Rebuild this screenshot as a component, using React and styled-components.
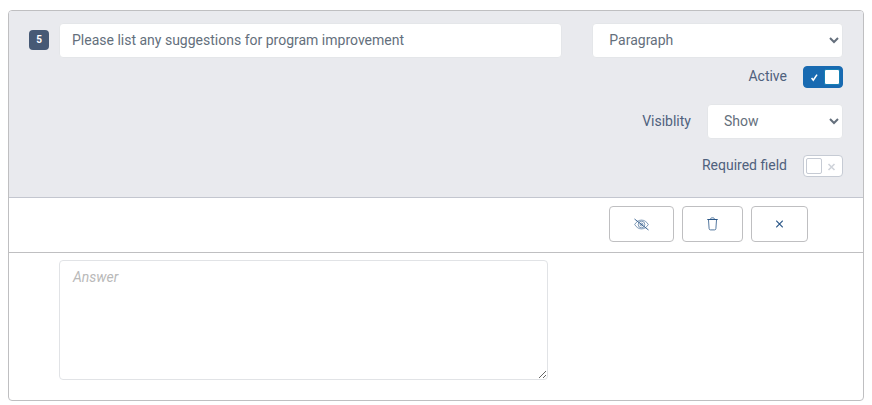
import { useState } from 'react';
import styled, { createGlobalStyle } from 'styled-components';

const GlobalStyle = createGlobalStyle`
  * {
    box-sizing: border-box;
  }
  body {
    margin: 10px 8px 4px;
    background: #fff;
    color: #4f617d;
    font-family: Roboto, 'Liberation Sans', sans-serif;
    font-size: 14px;
    line-height: 20px;
  }
`;

const Card = styled.form`
  border: 1px solid #bfbfc1;
  border-radius: 4px;
  overflow: hidden;
`;

const Header = styled.div`
  display: grid;
  grid-template-columns: 20px 2fr 1fr;
  align-items: start;
  padding: 12px 20px 20px;
  background: #e9eaee;
  border-bottom: 1px solid #c3c6cf;
`;

const Badge = styled.span`
  display: flex;
  align-items: center;
  justify-content: center;
  height: 20px;
  margin-top: 7px;
  border-radius: 4px;
  background: #465975;
  color: white;
  font-size: 10px;
  font-weight: 700;
`;

const Question = styled.div`
  display: flex;
  margin: 0 16px 0 10px;
`;

const Input = styled.input`
  width: 100%;
  height: 35px;
  padding: 5px 12px 7px;
  border: 1px solid #e4e6e9;
  border-radius: 4px;
  background: white;
  color: #646f7c;
  font: inherit;
  outline: none;
`;

const Settings = styled.div`
  display: flex;
  flex-direction: column;
  align-items: flex-end;
  margin-left: 14px;
`;

const Select = styled.select`
  width: ${(props) => props.$width || '100%'};
  height: 35px;
  padding: 5px 0 7px 12px;
  border: 1px solid #e4e6e9;
  border-radius: 4px;
  background: white;
  color: #646f7c;
  font: inherit;
  outline: none;
`;

const Setting = styled.label`
  display: flex;
  align-items: center;
  gap: 16px;
  margin-top: ${(props) => props.$top};
`;

const SettingText = styled.span`
  padding-bottom: 2px;
`;

const Switch = styled.span`
  display: grid;
  width: 40px;
  height: 22px;
`;

const SwitchInput = styled.input`
  grid-area: 1 / 1;
  appearance: none;
  width: 40px;
  height: 22px;
  margin: 0;
  border: 1px solid #c6cbd4;
  border-radius: 4px;
  background: white;
  cursor: pointer;
  &:checked {
    border-color: #186ab1;
    background: #186ab1;
  }
`;

const SwitchFace = styled.span`
  grid-area: 1 / 1;
  display: flex;
  flex-direction: ${(props) => (props.$on ? 'row-reverse' : 'row')};
  align-items: center;
  justify-content: space-between;
  padding: ${(props) => (props.$on ? '0 3px 0 7px' : '0 7px 0 3px')};
  pointer-events: none;
`;

const Knob = styled.span`
  width: 16px;
  height: 16px;
  border: 1px solid ${(props) => (props.$on ? '#1680b5' : '#c6cbd4')};
  border-radius: 2px;
  background: white;
`;

const Toolbar = styled.div`
  display: flex;
  justify-content: flex-end;
  gap: 8px;
  padding: 8px 55px 10px 20px;
  border-bottom: 1px solid #bfbfc1;
`;

const ToolButton = styled.button`
  display: flex;
  align-items: center;
  height: 36px;
  padding: 0 24px;
  border: 1px solid #bfbfc1;
  border-radius: 4px;
  background: white;
  color: #2b5788;
  cursor: pointer;
`;

const Answer = styled.div`
  padding: 7px 52px 20px 50px;
`;

const TextArea = styled.textarea`
  display: block;
  width: 65%;
  height: 120px;
  padding: 6px 13px;
  border: 1px solid #e1e3e6;
  border-radius: 4px;
  color: #646f7c;
  font: inherit;
  outline: none;
  resize: both;
  &::placeholder {
    color: #b9b9b9;
    font-style: italic;
  }
`;

const CheckIcon = () => (
  <svg width='9' height='9' viewBox='0 0 9 9' fill='none'>
    <path d='M1.6 5 3.3 7.2 7 1.6' stroke='#fff' strokeWidth='1.6' />
  </svg>
);

const OffIcon = () => (
  <svg width='9' height='9' viewBox='0 0 9 9' fill='none'>
    <path d='M1.5 2 7.5 8M7.5 2 1.5 8' stroke='#cfd3da' strokeWidth='1.6' />
  </svg>
);

const EyeOffIcon = () => (
  <svg width='15' height='13' viewBox='0 0 15 13' fill='none' stroke='currentColor' strokeWidth='0.6'>
    <path d='M.7 6.5C2.5 3.5 4.8 2.1 7.5 2.1s5 1.4 6.8 4.4c-1.8 3-4.1 4.4-6.8 4.4S2.5 9.5.7 6.5Z' />
    <circle cx='7.5' cy='6.5' r='3.3' />
    <circle cx='7.5' cy='6.5' r='1.4' />
    <path d='M.5 1 14.5 12' strokeWidth='0.9' />
  </svg>
);

const TrashIcon = () => (
  <svg width='11' height='14' viewBox='0 0 11 14' fill='none' stroke='currentColor'>
    <path d='M.3 2.500h10.400' />
    <path d='M3.400 2.500C3.400 1.300 4.200.8 5.500.8s2.100.5 2.100 1.700' strokeWidth='0.8' />
    <path d='M1.500 3 2.100 11.500q.1 1.400 1.400 1.400h4q1.300 0 1.400-1.400L9.500 3' strokeWidth='0.8' />
  </svg>
);

const CloseIcon = () => (
  <svg width='7' height='8' viewBox='0 0 7 8' fill='none' stroke='currentColor' strokeWidth='1.2'>
    <path d='M.2.7 6.800 7.300M6.800.7.2 7.300' />
  </svg>
);

const Toggle = ({ label, top, initial }) => {
  const [on, setOn] = useState(initial);

  return (
    <Setting $top={top}>
      <SettingText>{label}</SettingText>
      <Switch>
        <SwitchInput
          type='checkbox'
          checked={on}
          onChange={(e) => setOn(e.target.checked)}
        />
        <SwitchFace $on={on}>
          <Knob $on={on} />
          {on ? <CheckIcon /> : <OffIcon />}
        </SwitchFace>
      </Switch>
    </Setting>
  );
};

const App = () => {
  const [question, setQuestion] = useState(
    'Please list any suggestions for program improvement'
  );

  return (
    <>
      <GlobalStyle />
      <Card onSubmit={(e) => e.preventDefault()}>
        <Header>
          <Badge>5</Badge>
          <Question>
            <Input
              type='text'
              aria-label='Question'
              value={question}
              onChange={(e) => setQuestion(e.target.value)}
            />
          </Question>
          <Settings>
            <Select aria-label='Question type'>
              <option>Paragraph</option>
            </Select>
            <Toggle label='Active' top='8px' initial={true} />
            <Setting $top='16px'>
              <SettingText>Visiblity</SettingText>
              <Select $width='136px'>
                <option>Show</option>
              </Select>
            </Setting>
            <Toggle label='Required field' top='16px' initial={false} />
          </Settings>
        </Header>
        <Toolbar>
          <ToolButton type='button' aria-label='Hide'>
            <EyeOffIcon />
          </ToolButton>
          <ToolButton type='button' aria-label='Delete'>
            <TrashIcon />
          </ToolButton>
          <ToolButton type='button' aria-label='Close'>
            <CloseIcon />
          </ToolButton>
        </Toolbar>
        <Answer>
          <TextArea aria-label='Answer' placeholder='Answer' />
        </Answer>
      </Card>
    </>
  );
};

export default App;
